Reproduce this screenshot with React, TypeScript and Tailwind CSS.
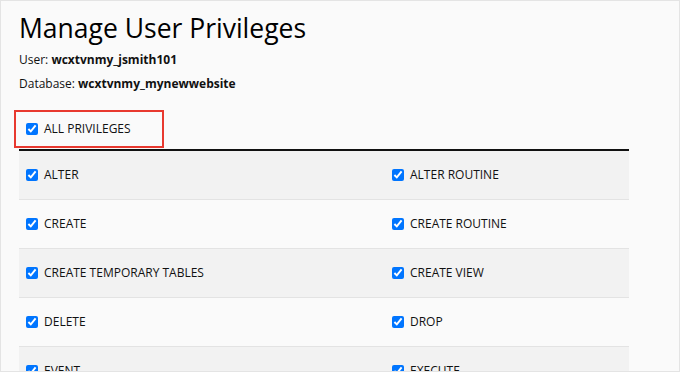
import React from 'react';

const rows: [string, string][] = [
  ['ALTER', 'ALTER ROUTINE'],
  ['CREATE', 'CREATE ROUTINE'],
  ['CREATE TEMPORARY TABLES', 'CREATE VIEW'],
  ['DELETE', 'DROP'],
  ['EVENT', 'EXECUTE'],
];

function Priv({ label }: { label: string }) {
  return (
    <label className="flex items-center gap-[6px]">
      <input type="checkbox" defaultChecked className="m-0 h-[12px] w-[12px]" />
      <span>{label}</span>
    </label>
  );
}

export default function App() {
  return (
    <div
      className="h-[372px] w-[680px] overflow-hidden border border-[#e4e4e4] bg-[#fafafa] text-[12px] text-[#111]"
      style={{ fontFamily: '"Open Sans", "Liberation Sans", sans-serif' }}
    >
      <div className="pl-[18px] pt-[9px]">
        <h1 className="text-[26.5px] leading-[36px] text-black">Manage User Privileges</h1>
        <p className="mt-[5px] leading-[18px]">
          User: <b>wcxtvnmy_jsmith101</b>
        </p>
        <p className="mt-[6px] leading-[18px]">
          Database: <b>wcxtvnmy_mynewwebsite</b>
        </p>

        <div className="ml-[-5px] mt-[17px] flex h-[38px] w-[150px] items-center border-2 border-[#e8392f] pl-[10px]">
          <Priv label="ALL PRIVILEGES" />
        </div>

        <div className="mt-[1px] w-[610px] border-t-2 border-[#111]">
          {rows.map(([a, b], i) => (
            <div
              key={a}
              className={`grid h-[49px] grid-cols-[366px_1fr] items-center border-b border-[#e3e3e3] pl-[7px] ${
                i % 2 === 0 ? 'bg-[#f2f2f2]' : 'bg-[#fafafa]'
              }`}
            >
              <Priv label={a} />
              <Priv label={b} />
            </div>
          ))}
        </div>
      </div>
    </div>
  );
}
